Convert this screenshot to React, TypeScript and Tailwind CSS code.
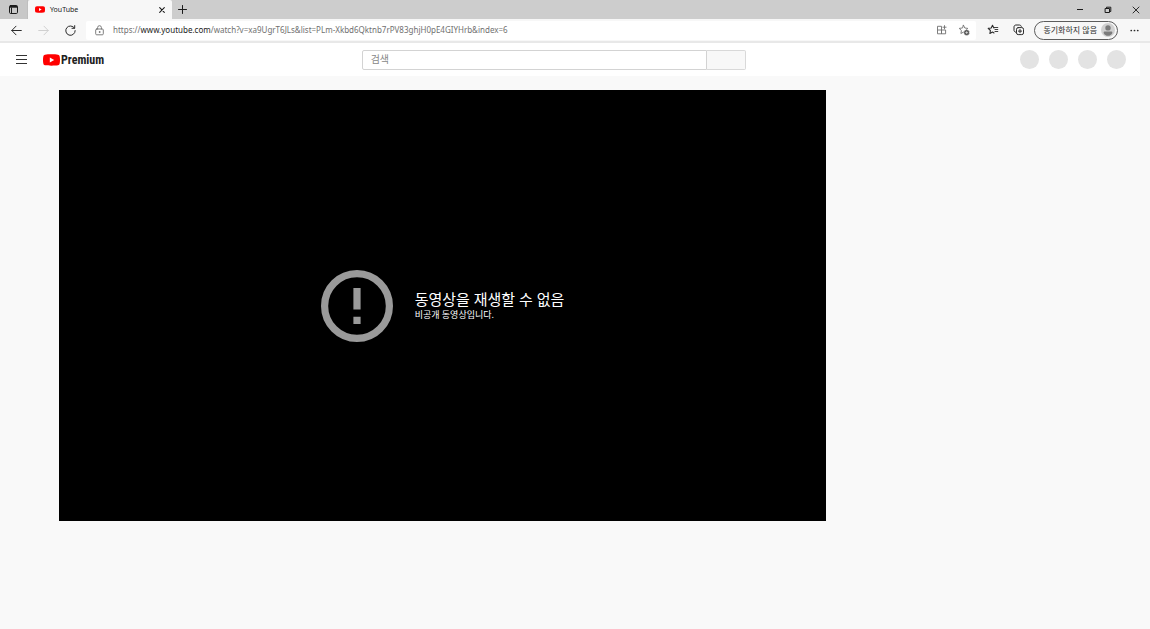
import { ReactNode } from "react";

/* ─────────────────────── Icons ─────────────────────── */
function Icon({
  children,
  className = "size-3",
  box = 12,
}: {
  children: ReactNode;
  className?: string;
  box?: number;
}) {
  return (
    <svg
      viewBox={`0 0 ${box} ${box}`}
      className={`block shrink-0 ${className}`}
      fill="none"
      stroke="currentColor"
      strokeLinecap="round"
      strokeLinejoin="round"
      aria-hidden="true"
    >
      {children}
    </svg>
  );
}

function PlayMark({ className }: { className: string }) {
  return (
    <svg viewBox="0 0 18 12" className={`block shrink-0 ${className}`} aria-hidden="true">
      <path
        d="M9 0c2.600 0 5.300.1 6.900.4 1 .2 1.500.8 1.700 1.600.3 1.200.4 2.600.4 4s-.1 2.800-.4 4c-.2.800-.7 1.400-1.700 1.600-1.600.3-4.300.4-6.900.4s-5.300-.1-6.900-.4C1.100 11.400.6 10.800.4 10 .1 8.800 0 7.400 0 6s.1-2.800.4-4C.6 1.200 1.100.6 2.100.4 3.700.1 6.400 0 9 0z"
        fill="#ff0000"
      />
      <path d="M7.200 3.400 11.900 6 7.200 8.600z" fill="#fff" />
    </svg>
  );
}

const STAR = "M5.500 1.300 6.800 4 9.800 4.400 7.600 6.500 8.100 9.500 5.500 8.100 2.900 9.500 3.400 6.500 1.200 4.400 4.200 4z";

/* ─────────────────────── Icon button ─────────────────────── */
function IconButton({
  label,
  children,
  className = "",
  disabled = false,
}: {
  label: string;
  children: ReactNode;
  className?: string;
  disabled?: boolean;
}) {
  return (
    <button
      type="button"
      aria-label={label}
      disabled={disabled}
      className={`flex shrink-0 items-center justify-center ${className}`}
    >
      {children}
    </button>
  );
}

/* ─────────────────────── Tab strip ─────────────────────── */
function TabStrip() {
  return (
    <div className="flex h-[19px] items-stretch bg-[#cdcdcd] text-[#1b1b1b]">
      <IconButton label="탭 작업 메뉴" className="w-7 border-r border-[#bfbfbf] bg-[#c8c8c8]">
        <Icon className="size-[9px]" box={9}>
          <rect x="0.500" y="0.500" width="8" height="8" rx="1.200" />
          <path d="M.8 1.700h7.400" strokeWidth="2" strokeLinecap="butt" />
          <path d="M2.500 2.500v5.500" strokeLinecap="butt" />
        </Icon>
      </IconButton>
      <div className="flex w-36 items-center rounded-t-xs bg-[#f7f7f7] pr-1.5 pl-[7px]">
        <PlayMark className="h-[7px] w-[10px]" />
        <span className="ml-[5px] flex-1 text-[7px] leading-3">YouTube</span>
        <IconButton label="탭 닫기" className="size-2">
          <Icon className="size-[6px]" box={6}>
            <path d="m.7.700 4.600 4.600M5.300.700.700 5.300" strokeWidth="1.100" />
          </Icon>
        </IconButton>
      </div>
      <IconButton label="새 탭" className="w-5">
        <Icon className="size-[9px]" box={9}>
          <path d="M4.500.500v8M.500 4.500h8" />
        </Icon>
      </IconButton>
      <div className="ml-auto flex items-center">
        <IconButton label="최소화" className="w-7">
          <Icon className="size-2" box={8}>
            <path d="M1 3.500h6" strokeLinecap="butt" />
          </Icon>
        </IconButton>
        <IconButton label="이전 크기로 복원" className="w-7">
          <Icon className="size-2" box={8}>
            <path d="M1.500 2.500h4v4h-4z" />
            <path d="M2.500 2V1.200h4.300v4.300H6" />
          </Icon>
        </IconButton>
        <IconButton label="닫기" className="w-7">
          <Icon className="size-2" box={8}>
            <path d="m1 1 6 6M7 1 1 7" strokeWidth="0.900" />
          </Icon>
        </IconButton>
      </div>
    </div>
  );
}

/* ─────────────────────── Address bar ─────────────────────── */
function AddressBar() {
  return (
    <div className="flex h-6 items-center border-b-2 border-[#e8e8e8] bg-[#f7f7f7] text-[#2b2b2b]">
      <div className="flex w-[86px] shrink-0 items-center gap-4 pl-[11px]">
        <IconButton label="뒤로" className="size-[11px]">
          <Icon className="size-[11px]" box={11}>
            <path d="M10.300 5.500H.8M5 1.200.8 5.500 5 9.800" />
          </Icon>
        </IconButton>
        <IconButton label="앞으로" className="size-[11px] text-[#d0d0d0]" disabled>
          <Icon className="size-[11px]" box={11}>
            <path d="M.7 5.500h9.500M6 1.200l4.200 4.300L6 9.800" />
          </Icon>
        </IconButton>
        <IconButton label="새로 고침" className="size-[11px]">
          <Icon className="size-[11px]" box={11}>
            <path d="M9.400 3A4.700 4.700 0 1 0 10.200 5.600M9.700.6v2.700H7" />
          </Icon>
        </IconButton>
      </div>
      <div className="flex h-[19px] min-w-0 flex-1 items-center rounded-xs bg-white pr-1.5 pl-2 text-[#707070]">
        <Icon className="size-[11px]" box={11}>
          <rect x="1.700" y="4" width="7.600" height="5.800" rx="1" strokeWidth="0.900" />
          <path d="M3.600 4V2.600a1.900 1.900 0 0 1 3.800 0V4" strokeWidth="0.900" />
          <circle cx="5.500" cy="7" r="0.400" fill="currentColor" />
        </Icon>
        <p className="ml-2 min-w-0 flex-1 truncate font-['Noto_Sans',sans-serif] text-[8px] leading-4">
          https://<span className="text-[#1b1b1b]">www.youtube.com</span>
          /watch?v=xa9UgrT6JLs&amp;list=PLm-Xkbd6Qktnb7rPV83ghjH0pE4GIYHrb&amp;index=6
        </p>
        <IconButton label="앱 사용 가능" className="mr-[11px]">
          <Icon className="size-[10px]" box={10}>
            <path
              d="M.9 1.300h3.600v7.500H.9zM.9 5h7.700v3.800H4.500V5M7.500.600v3.200M5.900 2.200h3.200"
              strokeWidth="0.900"
            />
          </Icon>
        </IconButton>
        <IconButton label="즐겨찾기에 추가">
          <Icon>
            <path d={STAR} strokeWidth="0.900" />
            <circle cx="8.700" cy="8.600" r="2.900" fill="#505050" stroke="#fff" strokeWidth="0.400" />
            <path d="M8.700 7.500v2.200M7.600 8.600h2.200" stroke="#fff" strokeWidth="0.600" />
          </Icon>
        </IconButton>
      </div>
      <div className="flex shrink-0 items-center pl-[11px]">
        <IconButton label="즐겨찾기">
          <Icon>
            <path
              d="M6.900 4 5.500 1.300 4.200 4l-3 .4 2.200 2.100-.5 3 2.600-1.400 1.500.8"
              strokeWidth="1.100"
            />
            <path d="M7 3.500h3.800M8 5.500h2.800M8 7.500h2.800" strokeWidth="0.900" />
          </Icon>
        </IconButton>
        <IconButton label="컬렉션" className="ml-[14px]">
          <Icon>
            <rect x="3.500" y="3.600" width="7" height="7" rx="1.700" />
            <path
              d="M2.600 8.200C1.500 7.800 1 7.200 1 6.200V3c0-1.200.8-2 2-2h3.300c1.100 0 1.700.5 2 1.400M7 5.500v3.200M5.400 7.100h3.200"
            />
          </Icon>
        </IconButton>
        <button
          type="button"
          className="ml-[9px] flex h-[19px] items-center gap-1 rounded-full border border-[#5c5c5c] pr-0.5 pl-2 text-[8px] leading-3"
        >
          동기화하지 않음
          <svg viewBox="0 0 14 14" className="block size-[14px]" aria-hidden="true">
            <circle cx="7" cy="7" r="7" fill="#d0d0d0" />
            <circle cx="7" cy="4.900" r="2.700" fill="#7b7b7b" />
            <path d="M2.600 9.900c0-.8.6-1.300 1.400-1.300h6c.8 0 1.400.5 1.400 1.300C10.600 11.800 9 12.700 7 12.700S3.400 11.800 2.600 9.900z" fill="#7b7b7b" />
          </svg>
        </button>
        <IconButton label="설정 및 기타" className="w-8">
          <Icon className="size-[9px]" box={9}>
            <path d="M1.200 4.500h.1M4.450 4.500h.1M7.700 4.500h.1" strokeWidth="1.700" />
          </Icon>
        </IconButton>
      </div>
    </div>
  );
}

/* ─────────────────────── Masthead ─────────────────────── */
function Masthead() {
  return (
    <header className="mr-[10px] grid h-[33px] grid-cols-[90fr_100fr_99fr] items-center bg-white pr-[14px] pl-4">
      <div className="flex items-center">
        <IconButton label="가이드" className="text-[#333]">
          <Icon className="size-[11px]" box={11}>
            <path d="M0 1.500h11M0 5.500h11M0 9.500h11" strokeWidth="1" strokeLinecap="butt" />
          </Icon>
        </IconButton>
        <a
          href="/"
          className="ml-4 flex items-center gap-px font-['Roboto_Condensed','Open_Sans_Condensed','Noto_Sans_ExtraCondensed','Noto_Sans_Condensed','Roboto',sans-serif] text-[12px] leading-4 font-bold text-[#212121]"
        >
          <PlayMark className="h-3 w-[17px]" />
          Premium
        </a>
      </div>
      <form role="search" className="flex h-5">
        <input
          type="search"
          aria-label="검색"
          placeholder="검색"
          className="min-w-0 flex-1 rounded-l-xs border border-[#d3d3d3] bg-white px-2 text-[10px] placeholder:text-[#888] focus:outline-none"
        />
        <button
          type="button"
          aria-label="검색 실행"
          className="w-[39px] rounded-r-xs border border-l-0 border-[#d9d9d9] bg-[#f8f8f8]"
        />
      </form>
      <div className="flex justify-end gap-[10px]" aria-hidden="true">
        {[0, 1, 2, 3].map((i) => (
          <span key={i} className="size-[19px] rounded-full bg-[#e3e3e3]" />
        ))}
      </div>
    </header>
  );
}

/* ─────────────────────── Player ─────────────────────── */
function Player() {
  return (
    <section className="flex aspect-video items-center justify-center bg-black text-white">
      <div className="flex items-center gap-[22px]">
        <svg viewBox="0 0 72 72" className="block size-[72px] shrink-0" aria-hidden="true">
          <circle cx="36" cy="36" r="32.400" fill="none" stroke="#9a9a9a" strokeWidth="7.200" />
          <path d="M32.400 18h7.200v21.600h-7.200zM32.400 46.800h7.200V54h-7.200z" fill="#9a9a9a" />
        </svg>
        <div className="pb-0.5">
          <h1 className="text-[15px] leading-5">동영상을 재생할 수 없음</h1>
          <p className="text-[9px] leading-3">비공개 동영상입니다.</p>
        </div>
      </div>
    </section>
  );
}

export default function App() {
  return (
    <div className="min-h-screen bg-[#f9f9f9] font-['Noto_Sans','Noto_Sans_CJK_KR',sans-serif]">
      <TabStrip />
      <AddressBar />
      <Masthead />
      <main className="pt-[14px] pr-[324px] pl-[59px]">
        <Player />
      </main>
    </div>
  );
}
